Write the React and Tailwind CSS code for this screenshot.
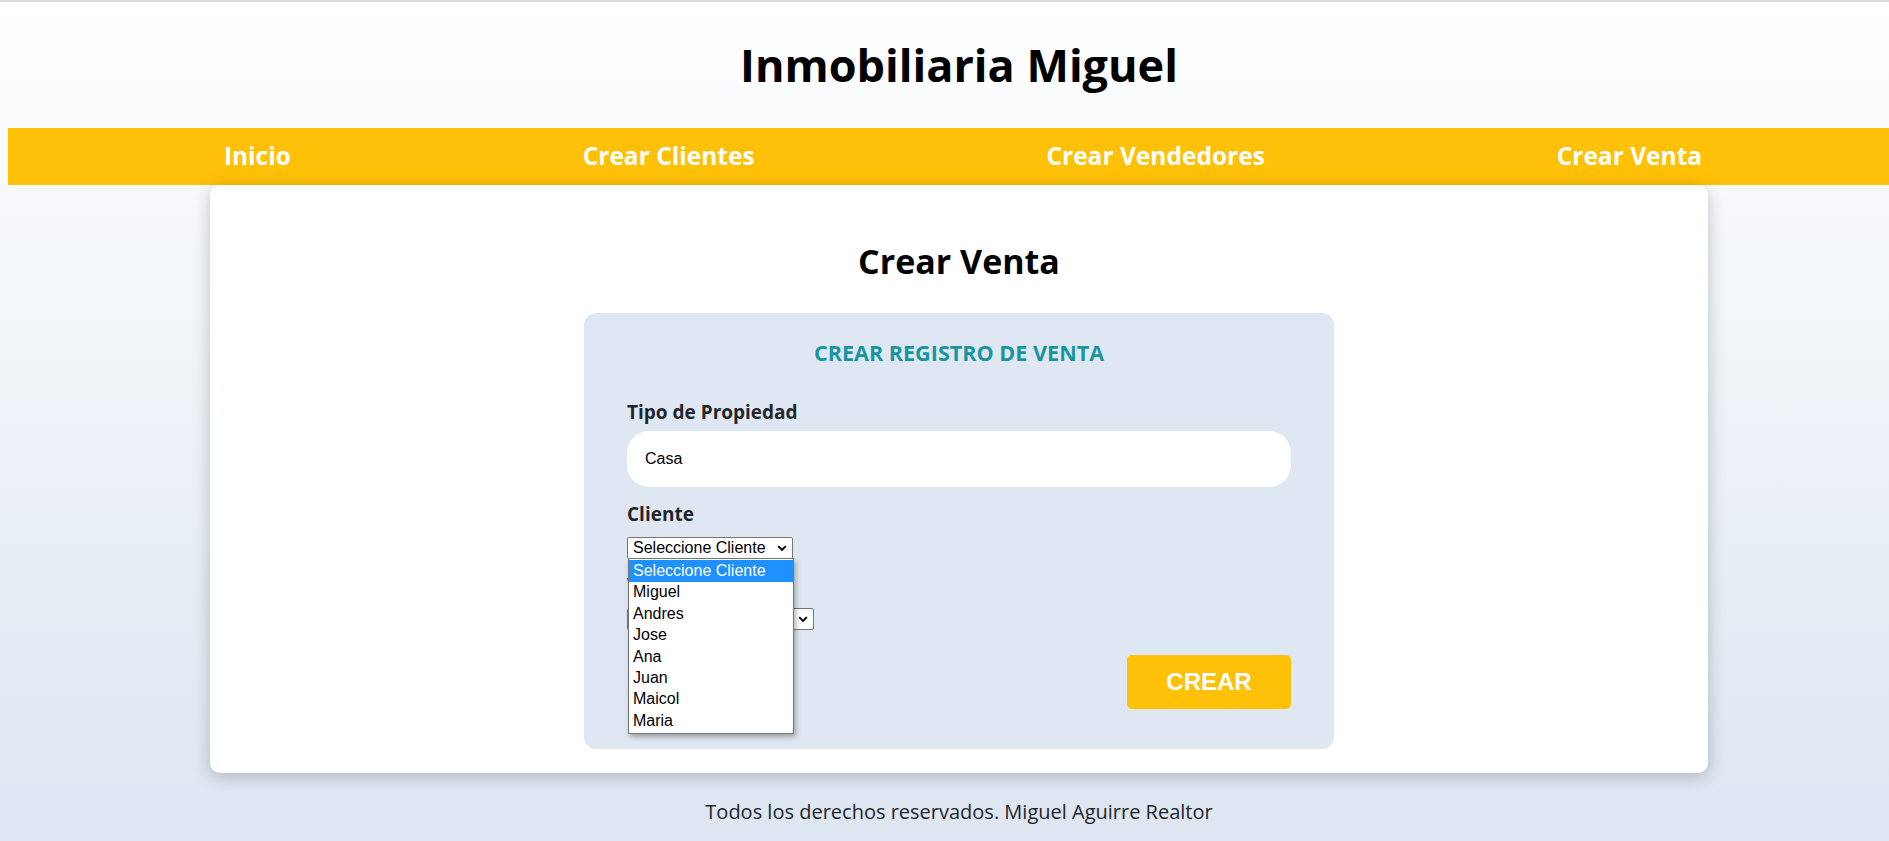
import React from "react";

const sans = { fontFamily: "'Open Sans', 'Noto Sans', sans-serif" };
const arial = { fontFamily: "'Liberation Sans', Arial, sans-serif" };

function Chevron() {
  return (
    <svg width="10" height="7" viewBox="0 0 10 7" className="shrink-0">
      <path d="M1.2 1.2 L5 5 L8.8 1.2" fill="none" stroke="#000" strokeWidth="1.9" />
    </svg>
  );
}

function FakeSelect({ text, width }) {
  return (
    <div
      className={`${width} h-[22px] flex items-center justify-between border border-[#767676] bg-white pl-[5px] pr-[5px] text-[16px] text-black leading-none rounded-[2px]`}
      style={arial}
    >
      <span>{text}</span>
      <Chevron />
    </div>
  );
}

function Label({ children, className }) {
  return (
    <div className={`text-[19px] font-bold text-[#212529] leading-[26px] ${className}`} style={sans}>
      {children}
    </div>
  );
}

export default function App() {
  const opts = ["Seleccione Cliente", "Miguel", "Andres", "Jose", "Ana", "Juan", "Maicol", "Maria"];
  return (
    <div className="w-full h-[841px] overflow-hidden">
      <div className="w-[1918px] min-h-[841px] bg-linear-to-b from-white to-[#dde6f1] border-t-2 border-[#dcdce0]">
        <header className="h-[126px] flex items-center justify-center">
          <h1 className="text-[45px] font-bold text-black" style={sans}>
            Inmobiliaria Miguel
          </h1>
        </header>
        <nav
          className="ml-2 h-[57px] bg-[#fec107] flex items-center justify-around px-[70px] text-white text-[24.5px] font-bold"
          style={sans}
        >
          <span>Inicio</span>
          <span>Crear Clientes</span>
          <span>Crear Vendedores</span>
          <span>Crear Venta</span>
        </nav>
        <main className="mx-[210px] bg-white rounded-[10px] shadow-[0_4px_18px_rgba(0,0,0,0.22)] pt-[51px] pb-[24px]">
          <h2 className="text-center text-[34px] font-bold text-black mb-[26px]" style={sans}>
            Crear Venta
          </h2>
          <div className="w-[750px] mx-auto bg-[#dfe8f2] rounded-[12px] pt-[24px] pb-[40px] px-[43px]">
            <h3 className="text-center text-[21.6px] font-bold text-[#17959f]" style={sans}>
              CREAR REGISTRO DE VENTA
            </h3>
            <Label className="mt-[30px]">Tipo de Propiedad</Label>
            <div className="mt-[6px] h-[56px] w-full rounded-[22px] bg-white flex items-center pl-[18px] text-[16px] text-black" style={arial}>
              Casa
            </div>
            <Label className="mt-[14px]">Cliente</Label>
            <div className="mt-[10px] relative">
              <FakeSelect text="Seleccione Cliente" width="w-[166px]" />
              <div
                className="absolute left-[1px] top-[21px] w-[166px] bg-white border border-[#767676] shadow-[2px_3px_5px_rgba(0,0,0,0.3)] z-10 py-[1px] text-[16px] text-black"
                style={arial}
              >
                {opts.map((o, i) => (
                  <div
                    key={o}
                    className={`h-[21.4px] flex items-center pl-[4px] leading-none ${i === 0 ? "bg-[#1e90ff] text-white" : ""}`}
                  >
                    {o}
                  </div>
                ))}
              </div>
            </div>
            <Label className="mt-[13px]">Vendedor</Label>
            <div className="mt-[10px]">
              <FakeSelect text="Seleccione Vendedor" width="w-[187px]" />
            </div>
            <div className="mt-[25px] flex justify-end">
              <button className="w-[164px] h-[54px] bg-[#fec107] rounded-[5px] text-white text-[24px] font-bold" style={arial}>
                CREAR
              </button>
            </div>
          </div>
        </main>
        <footer className="text-center text-[20px] text-[#212529] pt-[24px]" style={sans}>
          Todos los derechos reservados. Miguel Aguirre Realtor
        </footer>
      </div>
    </div>
  );
}
